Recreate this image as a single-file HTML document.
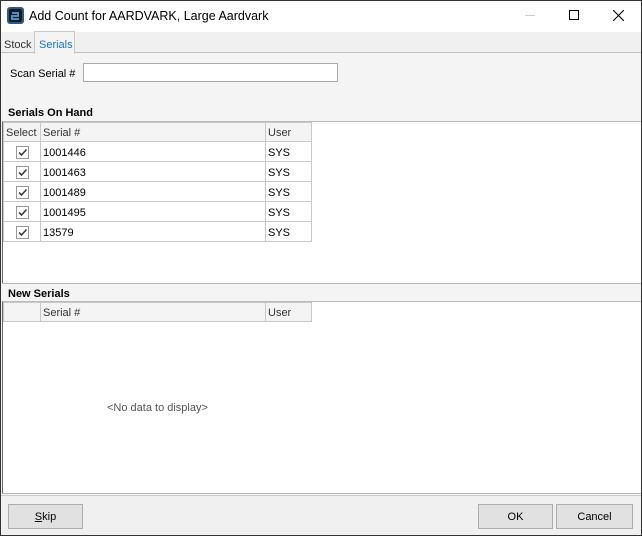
<!DOCTYPE html>
<html><head><style>
*{box-sizing:border-box;margin:0;padding:0}
body{width:642px;height:536px;position:relative;overflow:hidden;font-family:"Liberation Sans",sans-serif;font-size:11px;color:#000;background:#f4f4f4}
.a{position:absolute}
.win{left:0;top:0;width:642px;height:536px;border:1px solid #333;}
.grid td{border-right:1px solid #c8c8c8;border-bottom:1px solid #c8c8c8;height:20px;padding-left:2px;padding-top:2px;white-space:nowrap}
.grid{border-collapse:collapse;border-left:1px solid #c8c8c8;border-top:1px solid #c8c8c8;table-layout:fixed}
.hdr td{background:#f4f4f4;color:#333;height:19px}
.btn{border:1px solid #adadad;background:#e1e1e1;text-align:center;line-height:25px;font-size:11px;height:25px}
.chk{display:inline-block;width:13px;height:13px;border:1px solid #999;background:#fff;position:relative;margin-left:10px;vertical-align:middle}
</style></head><body>
<div class="a" style="left:0;top:0;width:642px;height:32px;background:#fff"></div>
<svg class="a" style="left:7px;top:7px" width="17" height="17" viewBox="0 0 17 17"><rect x="0" y="0" width="17" height="17" rx="3" fill="#2a5a8a"/><rect x="2" y="2" width="13" height="13" rx="2" fill="#1a1a1a"/><path d="M5 6h6v3H5v3h7" stroke="#4a90d0" stroke-width="2" fill="none"/></svg>
<div class="a" style="left:29px;top:9px;font-size:12.5px">Add Count for AARDVARK, Large Aardvark</div>
<div class="a" style="left:525px;top:15px;width:10px;height:1px;background:#ccc"></div>
<div class="a" style="left:569px;top:10px;width:10px;height:10px;border:1px solid #000"></div>
<svg class="a" style="left:613px;top:10px" width="11" height="11"><path d="M0 0L11 11M11 0L0 11" stroke="#000" stroke-width="1.1"/></svg>
<div class="a" style="left:1px;top:32px;width:640px;height:21px;background:#f0f0f0;border-bottom:1px solid #c0c0c0"></div>
<div class="a" style="left:4px;top:39px;color:#333">Stock</div>
<div class="a" style="left:34px;top:31px;width:41px;height:23px;background:#f4f4f4;border:1px solid #c8c8c8;border-bottom:none;color:#1a73c8;padding:7px 0 0 4px">Serials</div>
<div class="a" style="left:10px;top:68px">Scan Serial #</div>
<div class="a" style="left:83px;top:63px;width:255px;height:19px;background:#fff;border:1px solid #aaa"></div>
<div class="a" style="left:8px;top:107px;font-weight:bold">Serials On Hand</div>
<div class="a" style="left:2px;top:121px;width:639px;height:162px;background:#fff;border-top:1px solid #bbb;border-left:1px solid #666"></div>
<table class="a grid" style="left:3px;top:122px;width:309px">
<colgroup><col style="width:37px"><col style="width:225px"><col style="width:46px"></colgroup>
<tr class="hdr"><td>Select</td><td>Serial #</td><td>User</td></tr>
<tr><td><span class="chk"><svg width="11" height="11" style="position:absolute;left:0;top:0"><path d="M2 5.5L4.5 8L9.5 2.5" stroke="#333" stroke-width="1.5" fill="none"/></svg></span></td><td>1001446</td><td>SYS</td></tr>
<tr><td><span class="chk"><svg width="11" height="11" style="position:absolute;left:0;top:0"><path d="M2 5.5L4.5 8L9.5 2.5" stroke="#333" stroke-width="1.5" fill="none"/></svg></span></td><td>1001463</td><td>SYS</td></tr>
<tr><td><span class="chk"><svg width="11" height="11" style="position:absolute;left:0;top:0"><path d="M2 5.5L4.5 8L9.5 2.5" stroke="#333" stroke-width="1.5" fill="none"/></svg></span></td><td>1001489</td><td>SYS</td></tr>
<tr><td><span class="chk"><svg width="11" height="11" style="position:absolute;left:0;top:0"><path d="M2 5.5L4.5 8L9.5 2.5" stroke="#333" stroke-width="1.5" fill="none"/></svg></span></td><td>1001495</td><td>SYS</td></tr>
<tr><td><span class="chk"><svg width="11" height="11" style="position:absolute;left:0;top:0"><path d="M2 5.5L4.5 8L9.5 2.5" stroke="#333" stroke-width="1.5" fill="none"/></svg></span></td><td>13579</td><td>SYS</td></tr>
</table>
<div class="a" style="left:2px;top:283px;width:639px;height:1px;background:#bbb"></div>
<div class="a" style="left:8px;top:288px;font-weight:bold">New Serials</div>
<div class="a" style="left:2px;top:301px;width:639px;height:193px;background:#fff;border-top:1px solid #bbb;border-left:1px solid #666;border-bottom:1px solid #bbb"></div>
<table class="a grid" style="left:3px;top:302px;width:309px">
<colgroup><col style="width:37px"><col style="width:225px"><col style="width:46px"></colgroup>
<tr class="hdr"><td></td><td>Serial #</td><td>User</td></tr>
</table>
<div class="a" style="left:107px;top:402px;color:#555">&lt;No data to display&gt;</div>
<div class="a" style="left:1px;top:495px;width:640px;height:1px;background:#ccc"></div>
<div class="a" style="left:1px;top:496px;width:640px;height:39px;background:#f0f0f0"></div>
<div class="a btn" style="left:8px;top:504px;width:75px"><u>S</u>kip</div>
<div class="a btn" style="left:478px;top:504px;width:75px">OK</div>
<div class="a btn" style="left:556px;top:504px;width:77px">Cancel</div>
<div class="a win"></div>
</body></html>
